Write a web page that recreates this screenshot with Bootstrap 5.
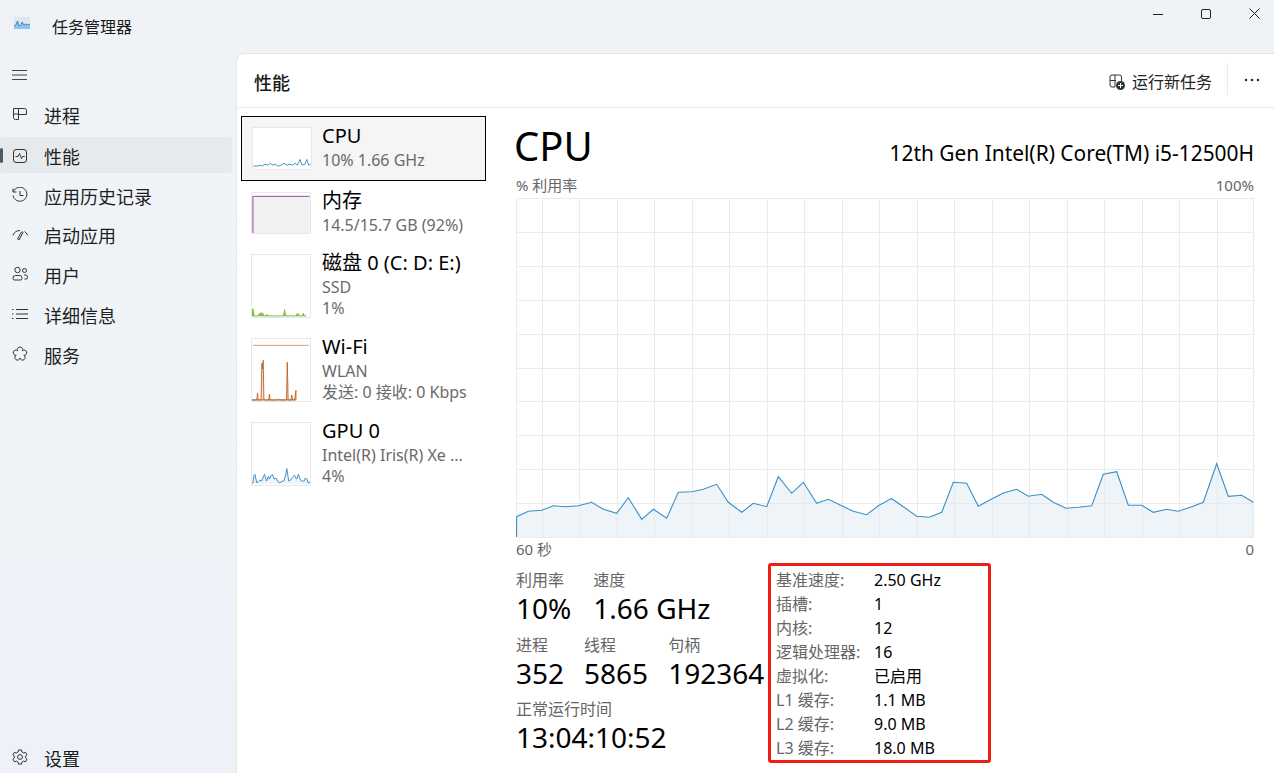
<!DOCTYPE html>
<html lang="zh-CN">
<head>
    <meta charset="UTF-8">
    <meta name="viewport" content="width=device-width, initial-scale=1.0">
    <title>任务管理器</title>
    <link href="https://cdn.jsdelivr.net/npm/bootstrap@5.3.0/dist/css/bootstrap.min.css" rel="stylesheet">
    <style>
        html, body { height: 100%; }
        body {
            width: 1274px; height: 773px; overflow: hidden;
            background: linear-gradient(180deg, #eff3f6 0%, #eff4f8 50%, #edf2f9 100%); color: #1a1a1a;
            font-family: "Noto Sans", "Noto Sans CJK SC", sans-serif;
            font-size: 16px;
        }
        .title-bar { height: 53px; }
        .app-icon { margin: 0 22px 8px 14px; }
        .app-name { font-size: 16px; }
        .win-btns { margin-right: -4px; padding-bottom: 29px; }
        .win-btn { width: 47.5px; text-align: center; line-height: 1; }
        .win-btn:not(:last-child) { padding-right: 2px; }
        .shell { height: 720px; }
        .side { width: 236px; flex: none; }
        .burger { height: 43px; padding-left: 12px; }
        .side-item { height: 40px; padding-left: 12px; margin-right: 4px; gap: 16px; font-size: 18px; position: relative; border-radius: 4px; color: #1f1f1f; }
        .side-item.active-item { background: #e6eaed; height: 36px; margin: 1px 4px 4px 0; padding-top: 5px; }
        .side-item.active-item::before { content: ""; position: absolute; left: 0; top: 11px; width: 3px; height: 15px; background: #4a5a6a; border-radius: 2px; }
        .side-item.tight { height: 39px; }
        .side-ico { width: 16px; height: 16px; flex: none; margin-bottom: 4px; }
        .side-foot { height: 28px; padding-left: 12px; gap: 16px; font-size: 18px; margin-top: auto; }
        .panel { flex: 1; background: #fff; border: 1px solid #e5e5e5; border-right: 0; border-bottom: 0; border-top-left-radius: 8px; min-width: 0; }
        .panel-head { height: 54px; border-bottom: 1px solid #e9e9e9; padding: 0 14px 0 17px; }
        .panel-title { font-size: 18px; font-weight: 500; margin-top: 5px; }
        .run-task { font-size: 16px; gap: 7px; color: #222; padding: 7px 15px 0 0; border-right: 1px solid #ebebeb; height: 32px; margin: 0 16px 4px 0; }
        .dots { margin-bottom: 2px; }
        .panel-body-wrap { height: 665px; }
        .dev-list { width: 259px; flex: none; padding: 8px 0 0 4px; }
        .dev-item { width: 245px; padding-left: 10px; gap: 11px; height: 84px; }
        .dev-item.picked { height: 65px; background: #f5f5f5; border: 1px solid #000; padding: 10px 0 0 10px; margin-bottom: 11px; gap: 10px; }
        .dev-item.short { height: 62px; }
        .thumb { width: 60px; height: 64px; flex: none; border: 1px solid #e8e8e8; background: #fff; display: block; }
        .thumb-cpu { height: 43px; }
        .thumb-mem { height: 42px; }
        .dev-name { font-size: 20px; line-height: 24px; color: #000; white-space: nowrap; margin-top: -3px; margin-bottom: 2px; }
        .dev-sub { font-size: 16px; line-height: 21px; color: #6a6a6a; white-space: nowrap; }
        .detail { flex: 1; padding: 11px 20px 0 20px; min-width: 0; }
        .cpu-title { font-size: 40px; line-height: 54px; color: #000; margin-left: -2px; }
        .cpu-model { font-size: 20.9px; line-height: 28px; color: #000; padding-bottom: 6px; }
        .axis-label { font-size: 15px; line-height: 20px; color: #666; }
        .axis-top { margin: 2px 0 3px; }
        .axis-bottom { margin-top: 1px; }
        .chart-svg { display: block; width: 738px; height: 340px; }
        .lbl { font-size: 16px; line-height: 21px; color: #666; margin: 1px 0 -1px; }
        .big-val { font-size: 28px; line-height: 36px; color: #000; white-space: nowrap; }
        .stats-left { width: 252px; flex: none; padding-top: 10px; }
        .stat-row { gap: 20px; margin-bottom: 8px; }
        .stat-row.first-row { gap: 22px; }
        .spec-box { width: 223px; height: 200px; border: 3px solid #f01c14; border-radius: 3px; padding: 2px 0 0 5px; margin-top: 4px; }
        .spec-row { height: 24px; font-size: 16px; line-height: 24px; }
        .spec-key { width: 98px; color: #666; flex: none; }
        .spec-val { color: #000; }
    </style>
</head>
<body>
    <!-- 标题栏 -->
    <div class="title-bar d-flex align-items-center justify-content-between">
        <div class="d-flex align-items-center">
            <svg class="app-icon" width="16" height="12" viewBox="0 0 16 12"><rect width="16" height="12" fill="#dde6ef"/><path d="M0 9l2-1 1.500-4 1.500 5 2-1 1-3 2 3 1.500-1 1.500 1 3-1v5H0z" fill="#8cc4f2"/><path d="M0 9l2-1 1.500-4 1.500 5 2-1 1-3 2 3 1.500-1 1.500 1 3-1" fill="none" stroke="#2d6cb0" stroke-width=".8"/></svg>
            <span class="app-name">任务管理器</span>
        </div>
        <div class="win-btns d-flex">
            <div class="win-btn"><svg width="10" height="10" viewBox="0 0 10 10"><path d="M0 5.500h10" stroke="#222" fill="none"/></svg></div>
            <div class="win-btn"><svg width="10" height="10" viewBox="0 0 10 10"><rect x=".5" y=".5" width="9" height="9" rx="1.500" stroke="#222" fill="none"/></svg></div>
            <div class="win-btn"><svg width="11" height="11" viewBox="0 0 11 11"><path d="M.5.5l10 10M10.500.5l-10 10" stroke="#222" fill="none"/></svg></div>
        </div>
    </div>

    <div class="shell d-flex">
        <!-- 左侧导航 -->
        <div class="side d-flex flex-column">
            <div class="burger d-flex align-items-center">
                <svg width="16" height="12" viewBox="0 0 16 12"><path d="M0 1.500h15M0 6h15M0 10.500h15" stroke="#444" fill="none"/></svg>
            </div>
            <div class="side-item d-flex align-items-center">
                <svg class="side-ico" viewBox="0 0 16 16" fill="none" stroke="#333"><path d="M1.500 2.500h5v11h-3a2 2 0 0 1-2-2zM6.500 2.500h6a2 2 0 0 1 2 2v4h-8M1.500 8h5"/></svg>进程
            </div>
            <div class="side-item active-item d-flex align-items-center">
                <svg class="side-ico" viewBox="0 0 16 16" fill="none" stroke="#333"><rect x="1.500" y="1.500" width="13" height="13" rx="2.500"/><path d="M3.500 8.500h2.500l1.500-3 2 5 1.200-2h2"/></svg>性能
            </div>
            <div class="side-item d-flex align-items-center">
                <svg class="side-ico" viewBox="0 0 16 16" fill="none" stroke="#333"><path d="M1 1.500v3.500h3.500M1.400 4.600A7 7 0 1 1 1 8.500M8 4v4.500h3.500"/></svg>应用历史记录
            </div>
            <div class="side-item tight d-flex align-items-center">
                <svg class="side-ico" viewBox="0 0 16 16" fill="none" stroke="#333"><path d="M.8 8.500A8 8 0 0 1 8 3.500M12.500 4.500A8 8 0 0 1 15.500 8M9.500 5L5.500 12l1.500 1L11 5.500a.9.9 0 0 0-1.500-.5z"/></svg>启动应用
            </div>
            <div class="side-item d-flex align-items-center">
                <svg class="side-ico" viewBox="0 0 16 16" fill="none" stroke="#333"><circle cx="5.500" cy="4" r="2.700"/><path d="M3.500 9.500h4a2.500 2.500 0 0 1 2.500 2.500v.5a1.500 1.500 0 0 1-1.500 1.500h-6A1.500 1.500 0 0 1 1 12.500V12a2.500 2.500 0 0 1 2.500-2.500z"/><circle cx="12.500" cy="4.500" r="2"/><path d="M12 9h1.500a2 2 0 0 1 2 2v.5a1.500 1.500 0 0 1-1.500 1.500h-1.500"/></svg>用户
            </div>
            <div class="side-item d-flex align-items-center">
                <svg class="side-ico" viewBox="0 0 16 16" fill="none" stroke="#333"><path d="M4 3.500h12M4 8h12M4 12.500h12M0 3.500h1.500M0 8h1.500M0 12.500h1.500"/></svg>详细信息
            </div>
            <div class="side-item d-flex align-items-center">
                <svg class="side-ico" viewBox="0 0 16 16" fill="none" stroke="#333"><path d="M5.650 4.760A2.600 2.600 0 1 1 10.350 4.760A2.600 2.600 0 1 1 11.800 9.240A2.600 2.600 0 1 1 8 12A2.600 2.600 0 1 1 4.200 9.240A2.600 2.600 0 1 1 5.650 4.760z"/></svg>服务
            </div>
            <div class="side-foot d-flex align-items-center">
                <svg class="side-ico" viewBox="0 0 16 16" fill="none" stroke="#333"><circle cx="8" cy="8" r="2.400"/><path d="M6.500 1h3l.4 2 1.700 1 2-.7 1.400 2.600-1.500 1.300v1.700l1.500 1.300-1.400 2.600-2-.7-1.700 1-.4 2h-3l-.4-2-1.700-1-2 .7L.9 10.200l1.500-1.300V7.200L.9 5.900l1.400-2.600 2 .7 1.700-1z"/></svg>设置
            </div>
        </div>

        <!-- 主面板 -->
        <div class="panel d-flex flex-column">
            <div class="panel-head d-flex align-items-center justify-content-between">
                <span class="panel-title">性能</span>
                <div class="d-flex align-items-center">
                    <div class="run-task d-flex align-items-center">
                        <svg width="16" height="16" viewBox="0 0 16 16" fill="none"><path d="M6 1h4.500a2 2 0 0 1 2 2v4M1 6.500h6M6 1v12H3a2 2 0 0 1-2-2V3a2 2 0 0 1 2-2z" stroke="#333"/><circle cx="11.500" cy="11.500" r="4.500" fill="#333"/><path d="M11.500 9v5M9 11.500h5" stroke="#fff"/></svg>
                        运行新任务
                    </div>
                    <svg class="dots" width="16" height="4" viewBox="0 0 16 4"><circle cx="2" cy="2" r="1.300" fill="#333"/><circle cx="8" cy="2" r="1.300" fill="#333"/><circle cx="14" cy="2" r="1.300" fill="#333"/></svg>
                </div>
            </div>

            <div class="panel-body-wrap d-flex">
                <!-- 设备列表 -->
                <div class="dev-list">
                    <div class="dev-item picked d-flex">
                        <svg class="thumb thumb-cpu" viewBox="0 0 60 43"><polyline fill="none" stroke="#3c8fc7" points="0,40 4,40 7,39 9,40 12,38 15,39 18,37 20,39 23,38 26,40 29,39 32,37 35,39 38,38 41,39 44,37 46,39 49,33 51,39 54,38 56,33 58,39 60,38"/></svg>
                        <div>
                            <div class="dev-name">CPU</div>
                            <div class="dev-sub">10% 1.66 GHz</div>
                        </div>
                    </div>
                    <div class="dev-item short d-flex">
                        <svg class="thumb thumb-mem" viewBox="0 0 60 42"><path d="M0 3.500h60V42H0z" fill="#f3f0f4"/><path d="M.5 42V3.500H60" fill="none" stroke="#8e3fa8"/></svg>
                        <div>
                            <div class="dev-name">内存</div>
                            <div class="dev-sub">14.5/15.7 GB (92%)</div>
                        </div>
                    </div>
                    <div class="dev-item d-flex">
                        <svg class="thumb" viewBox="0 0 60 64"><path d="M0 63V56h1.500l1 7h4l1-3 1 2 1-3 1 3 1-2 1 3h2l1-2 1 2h3l1-1 1 1h10l1-1 1-6 1.500 6 1 1h3l1-1 1 1h4l2-3 1 1 1 1 1 1h2l1-3 1 2 1 1h1z" fill="#8dc448" stroke="#6fae2b" stroke-width=".5"/></svg>
                        <div>
                            <div class="dev-name">磁盘 0 (C: D: E:)</div>
                            <div class="dev-sub">SSD</div>
                            <div class="dev-sub">1%</div>
                        </div>
                    </div>
                    <div class="dev-item d-flex">
                        <svg class="thumb" viewBox="0 0 60 64"><path d="M1 6.500h58" stroke="#dd9c66" fill="none"/><path d="M0 63h5l.7-7 .7 7h3l.8-38 .6 6 .8-9 .7 41h5l.7-6 .7 6h8l1-1 1 1h7l.8-39 .9 39h3l.8-5 .8 5h2l1.500-10v10z" fill="#f6dcc6" stroke="#b85f1e" stroke-width=".9"/></svg>
                        <div>
                            <div class="dev-name">Wi-Fi</div>
                            <div class="dev-sub">WLAN</div>
                            <div class="dev-sub">发送: 0 接收: 0 Kbps</div>
                        </div>
                    </div>
                    <div class="dev-item d-flex">
                        <svg class="thumb" viewBox="0 0 60 64"><path d="M0 63V62L1 62 2 54 3 53 5 62 6 61 8 59 10 60 12 55 13 53 15 60 17 55 18 58 20 54 21 53 23 58 25 57 27 61 29 62 31 60 33 60 35 53 36 47 38 60 40 59 42 56 44 54 46 58 48 53 50 59 52 60 54 60 55 57 57 58 58 62 60 61V63z" fill="#eef4f9" stroke="none"/><polyline fill="none" stroke="#3c8fc7" points="0,62 1,62 2,54 3,53 5,62 6,61 8,59 10,60 12,55 13,53 15,60 17,55 18,58 20,54 21,53 23,58 25,57 27,61 29,62 31,60 33,60 35,53 36,47 38,60 40,59 42,56 44,54 46,58 48,53 50,59 52,60 54,60 55,57 57,58 58,62 60,61"/></svg>
                        <div>
                            <div class="dev-name">GPU 0</div>
                            <div class="dev-sub">Intel(R) Iris(R) Xe ...</div>
                            <div class="dev-sub">4%</div>
                        </div>
                    </div>
                </div>

                <!-- CPU 详情 -->
                <div class="detail">
                    <div class="d-flex justify-content-between align-items-end">
                        <div class="cpu-title">CPU</div>
                        <div class="cpu-model">12th Gen Intel(R) Core(TM) i5-12500H</div>
                    </div>
                    <div class="axis-label axis-top d-flex justify-content-between"><span>% 利用率</span><span>100%</span></div>
                    <svg class="chart-svg" id="chart" viewBox="0 0 738 340"></svg>
                    <div class="axis-label axis-bottom d-flex justify-content-between"><span>60 秒</span><span>0</span></div>

                    <div class="d-flex">
                        <div class="stats-left">
                            <div class="d-flex stat-row first-row">
                                <div><div class="lbl">利用率</div><div class="big-val">10%</div></div>
                                <div><div class="lbl">速度</div><div class="big-val">1.66 GHz</div></div>
                            </div>
                            <div class="d-flex stat-row">
                                <div><div class="lbl">进程</div><div class="big-val">352</div></div>
                                <div><div class="lbl">线程</div><div class="big-val">5865</div></div>
                                <div><div class="lbl">句柄</div><div class="big-val">192364</div></div>
                            </div>
                            <div>
                                <div class="lbl">正常运行时间</div>
                                <div class="big-val">13:04:10:52</div>
                            </div>
                        </div>
                        <div class="spec-box">
                            <div class="spec-row d-flex"><span class="spec-key">基准速度:</span><span class="spec-val">2.50 GHz</span></div>
                            <div class="spec-row d-flex"><span class="spec-key">插槽:</span><span class="spec-val">1</span></div>
                            <div class="spec-row d-flex"><span class="spec-key">内核:</span><span class="spec-val">12</span></div>
                            <div class="spec-row d-flex"><span class="spec-key">逻辑处理器:</span><span class="spec-val">16</span></div>
                            <div class="spec-row d-flex"><span class="spec-key">虚拟化:</span><span class="spec-val">已启用</span></div>
                            <div class="spec-row d-flex"><span class="spec-key">L1 缓存:</span><span class="spec-val">1.1 MB</span></div>
                            <div class="spec-row d-flex"><span class="spec-key">L2 缓存:</span><span class="spec-val">9.0 MB</span></div>
                            <div class="spec-row d-flex"><span class="spec-key">L3 缓存:</span><span class="spec-val">18.0 MB</span></div>
                        </div>
                    </div>
                </div>
            </div>
        </div>
    </div>

    <script src="https://cdn.jsdelivr.net/npm/bootstrap@5.3.0/dist/js/bootstrap.bundle.min.js"></script>
    <script>
        // 折线数据，屏幕坐标
        const leftPts = [[20,230],[55,214],[95,211],[130,197],[165,200],[205,197],[245,187],[280,208],[320,220],[355,173],[395,238],[430,208],[470,235],[505,157],[545,155],[580,148],[620,133],[655,187],[695,217],[730,190],[770,200],[805,110],[845,160],[880,127],[920,190],[955,178],[995,197],[1030,214],[1070,224],[1105,197],[1140,178]];
        const rightPts = [[35,176],[70,200],[110,229],[148,232],[185,217],[220,127],[260,130],[295,199],[335,177],[370,159],[410,148],[445,169],[485,163],[520,187],[558,205],[595,202],[635,197],[670,103],[710,95],[745,196],[785,196],[820,217],[860,208],[895,214],[935,200],[970,187],[1010,71],[1045,169],[1085,166],[1120,187]];
        const points = leftPts.map(p => [p[0] / 3 + 510 - 516, p[1] / 3 + 440 - 198])
            .concat(rightPts.map(p => [p[0] / 3 + 880 - 516, p[1] / 3 + 440 - 198]));
        const line = points.map(p => p[0].toFixed(1) + ',' + p[1].toFixed(1)).join(' ');

        let grid = '';
        for (let i = 0; i <= 10; i++) {
            const y = Math.round(i * 33.9) + 0.5;
            grid += `<path d="M0 ${y}H738" stroke="#ebebeb"/>`;
        }
        for (let x = 25.7; x < 720; x += 37.5) {
            grid += `<path d="M${Math.round(x) + 0.5} 0V339" stroke="#ebebeb"/>`;
        }
        grid += '<path d="M.5 0V339M737.500 0V339" stroke="#ebebeb"/>';

        document.getElementById('chart').innerHTML = grid +
            `<polygon points="0,339 ${line} 738,339" fill="#dfe9f2" fill-opacity=".5"/>` +
            `<polyline points="0.5,339 ${line}" fill="none" stroke="#3c8fc7" stroke-width="1.1"/>`;
    </script>
</body>
</html>
